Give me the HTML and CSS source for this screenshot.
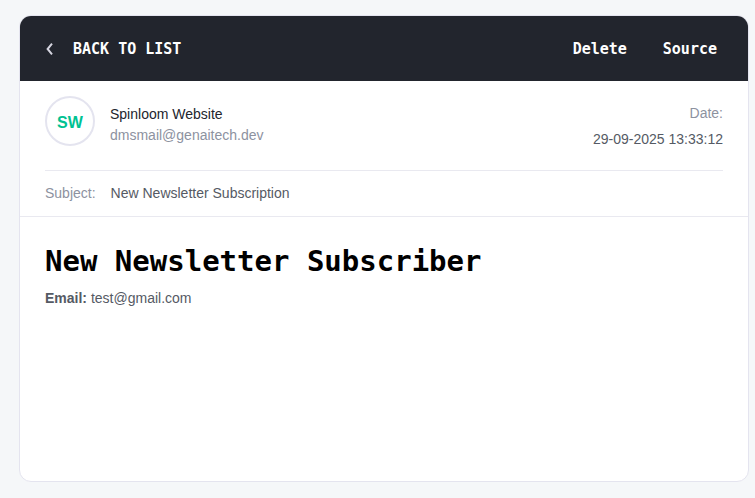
FILE: index.html
```html
<!DOCTYPE html>
<html lang="en">
<head>
<meta charset="utf-8">
<title>New Newsletter Subscription</title>
<link rel="stylesheet" href="styles.css">
</head>
<body>
<main class="card">
  <header class="toolbar">
    <a class="action back" href="#list">
      <svg class="chevron" width="8" height="14" viewBox="0 0 8 14" aria-hidden="true"><path d="M7 .7 2.6 6 7 11.3"/></svg>
      BACK TO LIST
    </a>
    <div class="actions">
      <button class="action" type="button">Delete</button>
      <button class="action" type="button">Source</button>
    </div>
  </header>
  <section class="meta">
    <div class="sender">
      <div class="avatar">SW</div>
      <div class="from">
        <div class="name">Spinloom Website</div>
        <div class="muted">dmsmail@genaitech.dev</div>
      </div>
      <div class="date">
        <div class="muted">Date:</div>
        <div>29-09-2025 13:33:12</div>
      </div>
    </div>
    <div class="subject">
      <span class="muted">Subject:</span>
      <span>New Newsletter Subscription</span>
    </div>
  </section>
  <article class="message">
    <h1>New Newsletter Subscriber</h1>
    <p><strong>Email:</strong> test@gmail.com</p>
  </article>
</main>
</body>
</html>
```
FILE: styles.css
```css
* {
  box-sizing: border-box;
}

body {
  display: flex;
  min-height: 100vh;
  margin: 0;
  padding: 15px 6px 16px 19px;
  background: #f5f7f9;
  color: #555a64;
  font: 14px/20px "Liberation Sans", Arial, sans-serif;
}

.card {
  flex: 1;
  border: 1px solid #e4e4ef;
  border-radius: 12px;
  background: #fff;
  overflow: hidden;
}

.toolbar {
  display: flex;
  align-items: center;
  justify-content: space-between;
  padding: 21px 31px 19px 25px;
  background: #22252d;
}

.action {
  padding: 0;
  border: 0;
  background: none;
  color: #fff;
  font: bold 15px/25px "DejaVu Sans Mono", monospace;
  text-decoration: none;
  cursor: pointer;
}

.back {
  display: flex;
  align-items: center;
  gap: 20px;
}

.chevron {
  fill: none;
  stroke: #d4d4df;
  stroke-width: 2;
}

.actions {
  display: flex;
  gap: 36px;
}

.meta {
  padding: 0 25px;
  border-bottom: 1px solid #e9e9f0;
}

.sender {
  display: flex;
  gap: 15px;
  padding: 15px 0 18px;
  border-bottom: 1px solid #e9e9f0;
}

.avatar {
  width: 50px;
  height: 50px;
  border: 2px solid #e4e4ef;
  border-radius: 50%;
  color: #00c292;
  font-size: 16px;
  font-weight: bold;
  line-height: 50px;
  text-align: center;
}

.from {
  padding-top: 8px;
  line-height: 21px;
}

.name {
  color: #22252d;
}

.muted {
  color: #8d929f;
}

.date {
  margin-left: auto;
  padding-top: 4px;
  line-height: 26px;
  text-align: right;
}

.subject {
  display: flex;
  gap: 15px;
  padding: 12px 0 13px;
}

.message {
  padding: 24px 25px;
}

h1 {
  margin: 0 0 6px;
  color: #000;
  font: bold 29px/41px "DejaVu Sans Mono", monospace;
}

p {
  margin: 0;
}
```
